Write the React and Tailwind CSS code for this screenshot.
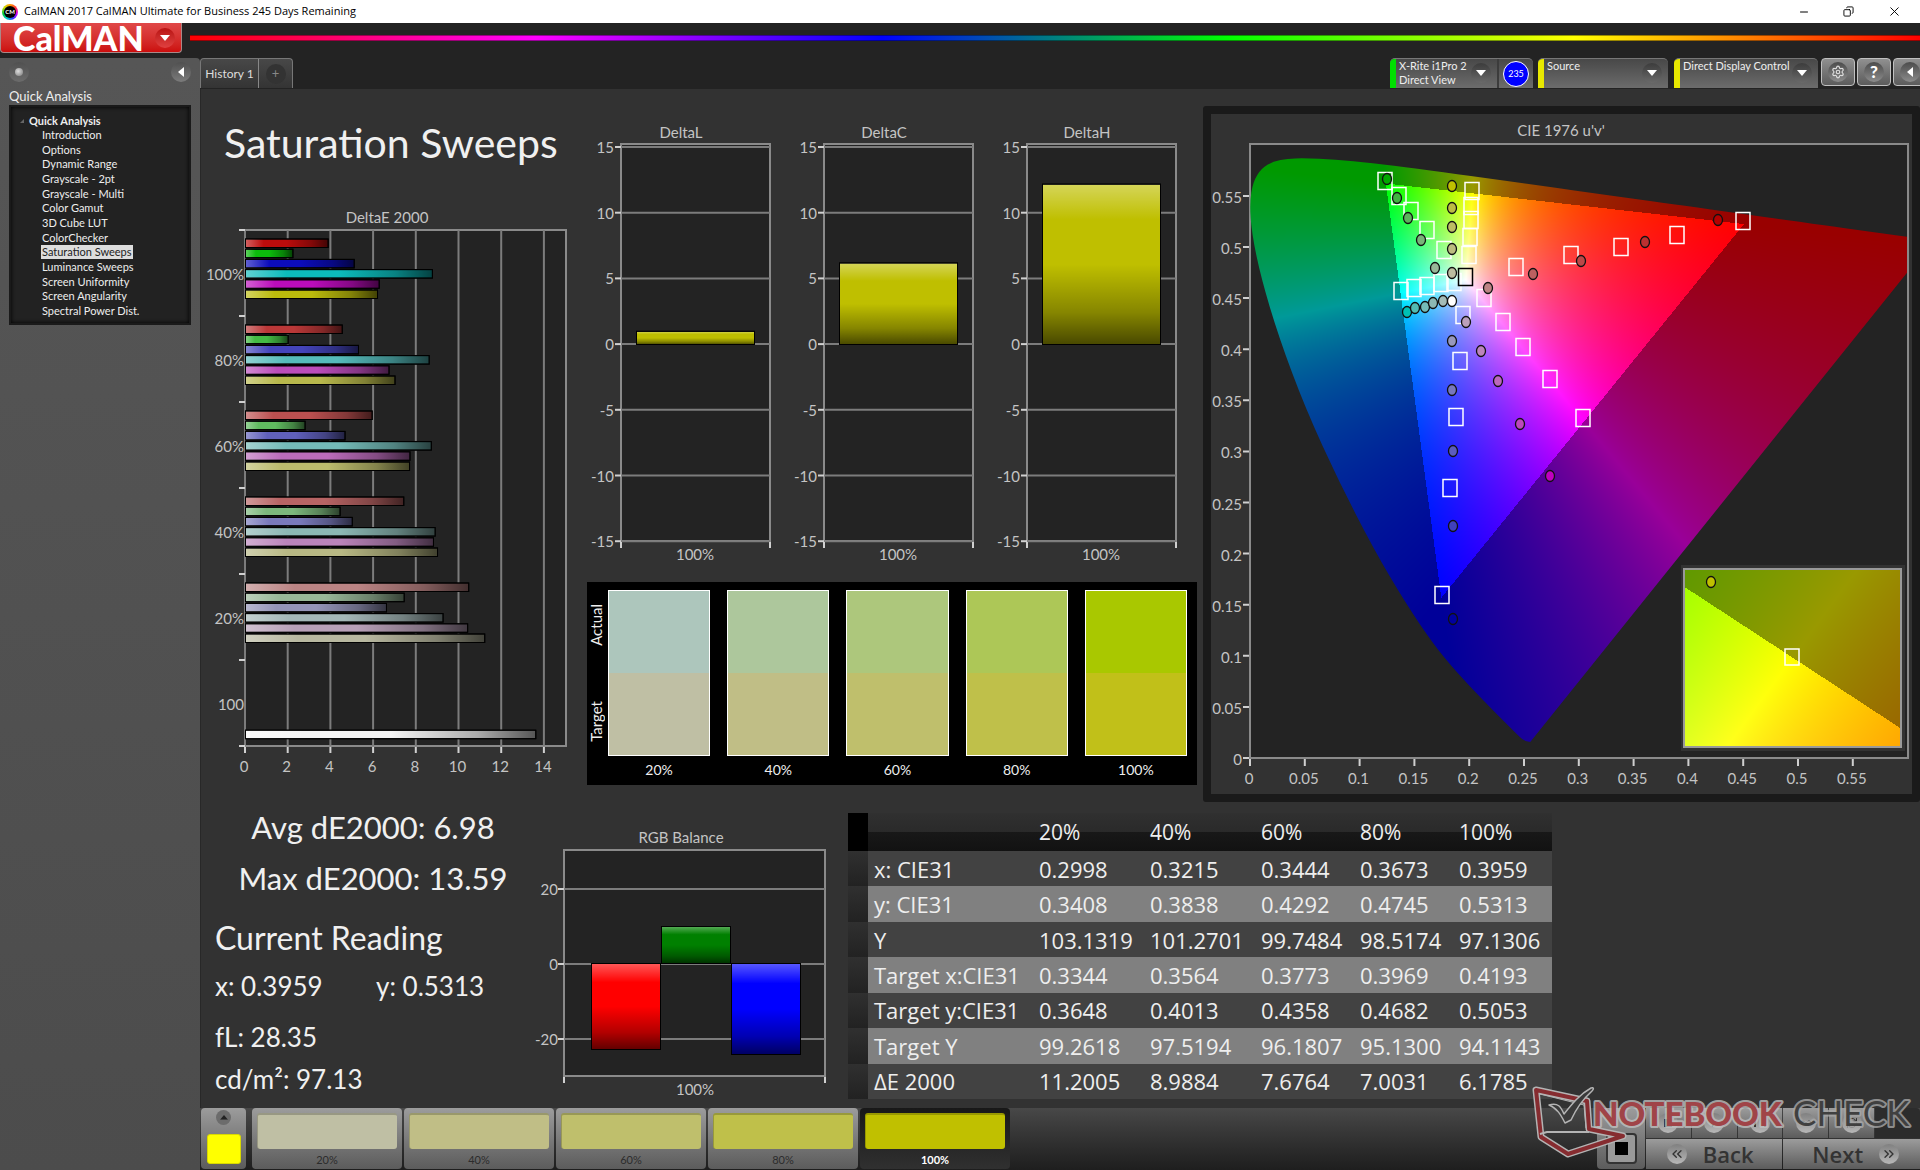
import { useEffect, useRef } from 'react'
import { Minus, Copy, X, Settings, ChevronsLeft, ChevronsRight, Infinity as Loop, RefreshCw } from 'lucide-react'

const TREE = [
  'Introduction',
  'Options',
  'Dynamic Range',
  'Grayscale - 2pt',
  'Grayscale - Multi',
  'Color Gamut',
  '3D Cube LUT',
  'ColorChecker',
  'Saturation Sweeps',
  'Luminance Sweeps',
  'Screen Uniformity',
  'Screen Angularity',
  'Spectral Power Dist.',
]

const DELTA_E = [
  { label: '100%', values: [3.87, 2.22, 5.09, 8.75, 6.26, 6.18], colors: ['#bb0c0c', '#0cbb0c', '#0c0cbb', '#0cbbbb', '#bb0cbb', '#bbbb0c'] },
  { label: '80%', values: [4.53, 2.0, 5.29, 8.6, 6.72, 7.0], colors: ['#bb3838', '#44bb44', '#4444bb', '#55bbbb', '#bb4cbb', '#b8b84c'] },
  { label: '60%', values: [5.93, 2.79, 4.66, 8.7, 7.7, 7.68], colors: ['#bb5050', '#60bb60', '#6060bb', '#74bbb8', '#bb6cbb', '#bbbb6c'] },
  { label: '40%', values: [7.41, 4.43, 5.0, 8.88, 8.8, 8.99], colors: ['#b86464', '#7cb87c', '#7a7abb', '#8cb8b4', '#bb84bb', '#b8b884'] },
  { label: '20%', values: [10.45, 7.43, 6.6, 9.25, 10.4, 11.2], colors: ['#bb8484', '#98b898', '#9494b8', '#a4b8b8', '#b8a0b8', '#b8b8a0'] },
  { label: '100', values: [0, 0, 0, 0, 0, 0, 13.59], colors: ['', '', '', '', '', '', '#f4f4f4'] },
]

const SWATCHES = [
  { label: '20%', actual: '#adc6bc', target: '#bfbfa4' },
  { label: '40%', actual: '#adc79c', target: '#c0be86' },
  { label: '60%', actual: '#adc77c', target: '#bfbf6c' },
  { label: '80%', actual: '#adc757', target: '#bfc04a' },
  { label: '100%', actual: '#a9c800', target: '#c1c019' },
]

const TABLE = [
  ['x: CIE31', '0.2998', '0.3215', '0.3444', '0.3673', '0.3959'],
  ['y: CIE31', '0.3408', '0.3838', '0.4292', '0.4745', '0.5313'],
  ['Y', '103.1319', '101.2701', '99.7484', '98.5174', '97.1306'],
  ['Target x:CIE31', '0.3344', '0.3564', '0.3773', '0.3969', '0.4193'],
  ['Target y:CIE31', '0.3648', '0.4013', '0.4358', '0.4682', '0.5053'],
  ['Target Y', '99.2618', '97.5194', '96.1807', '95.1300', '94.1143'],
  ['ΔE 2000', '11.2005', '8.9884', '7.6764', '7.0031', '6.1785'],
]

// spectral locus, CIE 1931 x, y
const LOCUS = [
  [0.1741, 0.005], [0.1714, 0.0051], [0.1689, 0.0069], [0.1644, 0.0109], [0.1566, 0.0177], [0.144, 0.0297],
  [0.1355, 0.0399], [0.1241, 0.0578], [0.1096, 0.0868], [0.0913, 0.1327], [0.0687, 0.2007], [0.0454, 0.295],
  [0.0235, 0.4127], [0.0082, 0.5384], [0.0039, 0.6548], [0.0139, 0.7502], [0.0389, 0.812], [0.0743, 0.8338],
  [0.1142, 0.8262], [0.1547, 0.8059], [0.2296, 0.7543], [0.3016, 0.6923], [0.3731, 0.6245], [0.4441, 0.5547],
  [0.5125, 0.4866], [0.5752, 0.4242], [0.627, 0.3725], [0.6915, 0.3083], [0.719, 0.2809], [0.7347, 0.2653],
]

const TARGETS = [
  [1385, 181], [1399, 196], [1411, 211], [1427, 230], [1444, 250],
  [1472, 191], [1471, 206], [1471, 220], [1470, 237], [1469, 255],
  [1401, 291], [1414, 288], [1427, 286], [1441, 283], [1454, 282],
  [1484, 298], [1503, 322], [1523, 347], [1550, 379], [1583, 418],
  [1463, 315], [1460, 361], [1456, 417], [1450, 488], [1442, 595],
  [1516, 267], [1571, 255], [1621, 247], [1677, 235], [1743, 221],
]

const READINGS = [
  [1387, 179, '#00a800'], [1397, 198, '#40b440'], [1408, 218, '#5cb45c'], [1421, 240, '#78b478'], [1435, 268, '#98b898'],
  [1452, 186, '#c0c000'], [1452, 208, '#bcbc44'], [1452, 227, '#bcbc64'], [1452, 249, '#bcbc80'], [1452, 273, '#bcbca0'],
  [1407, 312, '#00c0b4'], [1415, 308, '#50bcb4'], [1425, 307, '#74bcb8'], [1433, 303, '#8cb8b4'], [1443, 301, '#a4bcb8'],
  [1452, 301, '#ffffff'],
  [1488, 288, '#bc8484'], [1533, 274, '#bc6060'], [1581, 261, '#bc4848'], [1645, 242, '#bc3030'], [1718, 220, '#b40000'],
  [1466, 322, '#bca0bc'], [1481, 351, '#bc84bc'], [1498, 381, '#bc68bc'], [1520, 424, '#bc48bc'], [1550, 476, '#c000c0'],
  [1452, 341, '#9898bc'], [1452, 390, '#7878bc'], [1453, 451, '#5c5cbc'], [1453, 526, '#4040bc'], [1453, 619, '#0000a0'],
]

// brightest linear RGB of a chromaticity, dimmed outside of the gamut
function chromaColor(x, y) {
  const X = x / y
  const Z = (1 - x - y) / y
  const rgb = [
    3.2406 * X - 1.5372 - 0.4986 * Z,
    -0.9689 * X + 1.8758 + 0.0415 * Z,
    0.0557 * X - 0.204 + 1.057 * Z,
  ]
  const inside = Math.min(...rgb) >= 0
  const max = Math.max(...rgb)
  return rgb.map((c) => (Math.max(c, 0) / max) * (inside ? 255 : 153))
}

function ChromaCanvas({ width, height, toXy, outline }) {
  const ref = useRef(null)

  useEffect(() => {
    const ctx = ref.current.getContext('2d')
    const image = ctx.createImageData(width, height)
    for (let py = 0; py < height; py++) {
      for (let px = 0; px < width; px++) {
        const [x, y] = toXy(px, py)
        const [r, g, b] = chromaColor(x, y)
        image.data.set([r, g, b, 255], (py * width + px) * 4)
      }
    }
    ctx.putImageData(image, 0, 0)
    if (outline) {
      ctx.globalCompositeOperation = 'destination-in'
      ctx.beginPath()
      ctx.moveTo(...outline[0])
      for (let i = 1; i < outline.length - 1; i++) {
        const [ax, ay] = outline[i]
        const [bx, by] = outline[i + 1]
        ctx.quadraticCurveTo(ax, ay, (ax + bx) / 2, (ay + by) / 2)
      }
      ctx.lineTo(...outline[outline.length - 1])
      ctx.closePath()
      ctx.fill()
      ctx.globalCompositeOperation = 'source-over'
    }
  }, [width, height, toXy, outline])

  return <canvas ref={ref} width={width} height={height} className="block h-full w-full" />
}

const uvToXy = (px, py) => {
  const u = (px + 2) / 1099
  const v = (614 - py) / 1024
  const d = 6 * u - 16 * v + 12
  return [(9 * u) / d, (4 * v) / d]
}
const insetToXy = (px, py) => [0.4193 + (px - 109) / 3460, 0.5053 - (py - 89) / 2850]
const OUTLINE = LOCUS.map(([x, y]) => {
  const d = -2 * x + 12 * y + 3
  return [((4 * x) / d) * 1099 - 2, 614 - ((9 * y) / d) * 1024]
})

function Shades() {
  return (
    <svg className="absolute h-0 w-0" aria-hidden="true">
      <defs>
        <linearGradient id="shade-h">
          <stop offset="0" stopColor="#fff" stopOpacity="0.35" />
          <stop offset="0.22" stopColor="#fff" stopOpacity="0" />
          <stop offset="0.5" stopColor="#000" stopOpacity="0" />
          <stop offset="0.8" stopColor="#000" stopOpacity="0.3" />
          <stop offset="1" stopColor="#000" stopOpacity="0.65" />
        </linearGradient>
        <linearGradient id="shade-v" x1="0" y1="0" x2="0" y2="1">
          <stop offset="0" stopColor="#fff" stopOpacity="0.35" />
          <stop offset="0.22" stopColor="#fff" stopOpacity="0" />
          <stop offset="0.5" stopColor="#000" stopOpacity="0" />
          <stop offset="0.8" stopColor="#000" stopOpacity="0.3" />
          <stop offset="1" stopColor="#000" stopOpacity="0.62" />
        </linearGradient>
      </defs>
    </svg>
  )
}

function Bar({ x, y, width, height, color, shade }) {
  return (
    <g stroke="#000" strokeWidth="1">
      <rect x={x} y={y} width={width} height={height} fill={color} />
      <rect x={x} y={y} width={width} height={height} fill={`url(#${shade})`} />
    </g>
  )
}

function DeltaEChart() {
  return (
    <svg viewBox="1 0 374 580" className="block w-full font-['Lato',sans-serif]" fill="#c4c4c4" fontSize="15">
      <text x="187" y="18" textAnchor="middle">DeltaE 2000</text>
      <rect x="45" y="25" width="321" height="516" fill="#232323" stroke="#8a8a8a" strokeWidth="2" />
      {[0, 1, 2, 3, 4, 5, 6, 7].map((i) => (
        <g key={i}>
          <path d={`M${45 + i * 42.7} 25V541`} stroke="#7c7c7c" strokeWidth="2" />
          <path d={`M${45 + i * 42.7} 542v6`} stroke="#d0d0d0" strokeWidth="2" />
          <text x={44 + i * 42.7} y="567" textAnchor="middle">{i * 2}</text>
        </g>
      ))}
      {[0, 1, 2, 3, 4, 5, 6].map((i) => (
        <path key={i} d={`M39 ${25 + i * 86}h6`} stroke="#d0d0d0" strokeWidth="2" />
      ))}
      {DELTA_E.map((group, i) => (
        <g key={group.label}>
          <text x="44" y={75 + i * 86} textAnchor="end">{group.label}</text>
          {group.values.map((value, j) =>
            value > 0 ? (
              <Bar key={j} x={45.5} y={34 + i * 86 + j * 10.2} width={value * 21.36} height={8.5} color={group.colors[j]} shade="shade-h" />
            ) : null
          )}
        </g>
      ))}
    </svg>
  )
}

function DeltaChart({ title, value }) {
  const height = value * 13.14
  return (
    <svg viewBox="0 0 203 450" className="block w-full font-['Lato',sans-serif]" fill="#c4c4c4" fontSize="15">
      <text x="101" y="23" textAnchor="middle">{title}</text>
      <rect x="41" y="29" width="149" height="397" fill="#232323" stroke="#8a8a8a" strokeWidth="2" />
      {[15, 10, 5, 0, -5, -10, -15].map((tick, i) => (
        <g key={tick}>
          <path d={`M41 ${32 + i * 65.7}H190`} stroke="#7c7c7c" strokeWidth="2" />
          <path d={`M35 ${32 + i * 65.7}h6`} stroke="#d0d0d0" strokeWidth="2" />
          <text x="34" y={38 + i * 65.7} textAnchor="end">{tick}</text>
        </g>
      ))}
      <path d="M41 427v6M190 427v6" stroke="#d0d0d0" strokeWidth="2" />
      <Bar x={56.5} y={229.5 - height} width={118} height={height} color="#bfbf00" shade="shade-v" />
      <text x="115" y="445" textAnchor="middle">100%</text>
    </svg>
  )
}

function RgbBalance() {
  return (
    <svg viewBox="-9 0 299 280" className="block w-full font-['Lato',sans-serif]" fill="#c4c4c4" fontSize="15">
      <text x="141" y="23" textAnchor="middle">RGB Balance</text>
      <rect x="24" y="30" width="261" height="226" fill="#232323" stroke="#8a8a8a" strokeWidth="2" />
      {[20, 0, -20].map((tick, i) => (
        <g key={tick}>
          <path d={`M24 ${69 + i * 75}H285`} stroke="#7c7c7c" strokeWidth="2" />
          <path d={`M18 ${69 + i * 75}h6`} stroke="#d0d0d0" strokeWidth="2" />
          <text x="18" y={75 + i * 75} textAnchor="end">{tick}</text>
        </g>
      ))}
      <path d="M24 257v6M285 257v6" stroke="#d0d0d0" strokeWidth="2" />
      <Bar x={51.5} y={143.5} width={69} height={86} color="#ff0000" shade="shade-v" />
      <Bar x={121.5} y={106.5} width={69} height={37} color="#008000" shade="shade-v" />
      <Bar x={191.5} y={143.5} width={69} height={91} color="#0000ff" shade="shade-v" />
      <text x="155" y="275" textAnchor="middle">100%</text>
    </svg>
  )
}

function CieChart() {
  const ticks = [0, 0.05, 0.1, 0.15, 0.2, 0.25, 0.3, 0.35, 0.4, 0.45, 0.5, 0.55]
  return (
    <svg viewBox="1211 114 701 680" className="block w-full font-['Lato',sans-serif]" fill="#c4c4c4" fontSize="15">
      <text x="1561" y="136" textAnchor="middle">CIE 1976 u'v'</text>
      <rect x="1250" y="144" width="658" height="614" fill="#232323" stroke="#8a8a8a" strokeWidth="2" />
      {ticks.map((tick, i) => (
        <g key={tick}>
          <path d={`M${1250 + i * 54.8} 759v7M1243 ${758 - i * 51.1}h6`} stroke="#d0d0d0" strokeWidth="2" />
          <text x={1249 + i * 54.8} y="784" textAnchor="middle">{tick}</text>
          <text x="1242" y={765 - i * 51.1} textAnchor="end">{tick}</text>
        </g>
      ))}
      <foreignObject x="1250" y="145" width="657" height="612">
        <ChromaCanvas width={657} height={612} toXy={uvToXy} outline={OUTLINE} />
      </foreignObject>
      {TARGETS.map(([x, y]) => (
        <rect key={`${x}-${y}`} x={x - 7} y={y - 8.5} width="14" height="17" fill="none" stroke="#fff" strokeWidth="1.5" />
      ))}
      <rect x="1458.5" y="268.5" width="14" height="17" fill="none" stroke="#000" strokeWidth="1.5" />
      {READINGS.map(([x, y, color]) => (
        <ellipse key={`${x}-${y}`} cx={x} cy={y} rx="4.5" ry="5.5" fill={color} stroke="#111" strokeWidth="1.3" />
      ))}
      <rect x="1681" y="565" width="224" height="186" fill="#323232" />
      <foreignObject x="1683" y="568" width="219" height="180">
        <ChromaCanvas width={219} height={180} toXy={insetToXy} />
      </foreignObject>
      <rect x="1684" y="569" width="217" height="178" fill="none" stroke="#999" strokeWidth="2" />
      <rect x="1785" y="649" width="14" height="16" fill="none" stroke="#fff" strokeWidth="1.5" />
      <ellipse cx="1711" cy="582" rx="4.5" ry="5.5" fill="#c0c000" stroke="#111" strokeWidth="1.3" />
    </svg>
  )
}

function Triangle({ className }) {
  return (
    <svg viewBox="0 0 10 6" className={className}>
      <path d="M0 0h10L5 6z" fill="currentColor" />
    </svg>
  )
}

function DeviceTab({ lines, stripe, className, children }) {
  return (
    <div className={`flex h-[30px] overflow-hidden rounded-t-[5px] border-t border-[#777] bg-gradient-to-b from-[#484848] to-[#6c6c6c] ${className}`}>
      <span className={`w-[6px] shrink-0 ${stripe}`}></span>
      <button className="flex flex-1 justify-between pr-[6px] pl-[3px] text-left text-[11px] leading-[14px] text-[#eee]">
        <span>
          {lines.map((line) => (
            <span key={line} className="block whitespace-nowrap">{line}</span>
          ))}
        </span>
        <span className="mt-1 flex h-5 w-5 items-center justify-center rounded-full bg-gradient-to-b from-[#3c3c3c] to-[#6a6a6a]">
          <Triangle className="w-[10px] text-white" />
        </span>
      </button>
      {children}
    </div>
  )
}

function TopBar() {
  return (
    <>
      <div className="flex h-[23px] items-center bg-white text-black">
        <span className="ml-[2px] flex h-4 w-4 items-center justify-center rounded-full bg-[conic-gradient(#f90,#f33,#c0f,#33f,#0cc,#0c3,#cd0,#f90)]">
          <span className="flex h-3 w-3 items-center justify-center rounded-full bg-black font-['Lato',sans-serif] text-[6px] font-bold text-white">CM</span>
        </span>
        <span className="ml-[6px] flex-1 font-['Open_Sans',sans-serif] text-[11px]">CalMAN 2017 CalMAN Ultimate for Business 245 Days Remaining</span>
        <button aria-label="Minimize" className="mr-[33px]"><Minus className="h-3 w-3" strokeWidth={2} /></button>
        <button aria-label="Restore" className="mr-[33px]"><Copy className="h-[11px] w-[11px] -scale-x-100" strokeWidth={2} /></button>
        <button aria-label="Close" className="mr-[18px]"><X className="h-[15px] w-[15px]" strokeWidth={1.5} /></button>
      </div>
      <header className="flex h-[35px] items-start bg-[#232323]">
        <button className="flex h-[30px] w-[182px] items-center justify-between rounded-b-[4px] border-x border-b border-[#a88] bg-gradient-to-b from-[#e04848] to-[#cc0c0c] pl-3 pr-[6px]">
          <span className="text-[34px] leading-7 font-black text-white">CalMAN</span>
          <span className="flex h-5 w-5 items-center justify-center rounded-full bg-gradient-to-b from-[#b81010] to-[#e04040]">
            <Triangle className="w-[10px] text-white" />
          </span>
        </button>
        <div className="mt-[12px] ml-2 h-[6px] flex-1 border-y border-black/40 bg-[linear-gradient(to_right,#f00_0%,#f0f_20%,#00f_40%,#0f0_60%,#ff0_80%,#f00_100%)]"></div>
      </header>
    </>
  )
}

function Sidebar() {
  return (
    <aside className="w-[200px] shrink-0 rounded-tr-[4px] bg-gradient-to-b from-[#565656] to-[#4c4c4c]">
      <div className="flex justify-between px-[9px] pt-1">
        <button aria-label="Record" className="flex h-5 w-5 items-center justify-center rounded-full bg-gradient-to-b from-[#505050] to-[#6c6c6c]">
          <span className="h-2 w-2 rounded-full bg-[radial-gradient(circle_at_40%_40%,#ddd,#777)]"></span>
        </button>
        <button aria-label="Collapse" className="flex h-5 w-5 items-center justify-center rounded-full bg-gradient-to-b from-[#505050] to-[#7c7c7c]">
          <Triangle className="w-[10px] rotate-90 text-white" />
        </button>
      </div>
      <h2 className="mt-[6px] mb-[1px] pl-[9px] text-[13px] leading-4 text-[#eee]">Quick Analysis</h2>
      <nav className="mx-[9px] h-[220px] border-2 border-[#1a1a1a] bg-[#222] pt-[6px] text-[#eee] shadow-[inset_0_0_4px_#000]">
        <div className="flex items-center pl-[9px]">
          <svg viewBox="0 0 4 4" className="mr-[5px] h-[4px] w-[4px]"><path d="M4 0v4H0z" fill="#666" /></svg>
          <a href="#quick" className="text-[11px] leading-[15px] font-bold">Quick Analysis</a>
        </div>
        <ul className="flex h-[190px] flex-col justify-between pl-[30px] text-[11px] leading-[14px]">
          {TREE.map((item) => (
            <li key={item} className="flex">
              <a href="#item" className={item === 'Saturation Sweeps' ? 'bg-[#ddd] px-[1px] text-[#222]' : 'px-[1px]'}>{item}</a>
            </li>
          ))}
        </ul>
      </nav>
    </aside>
  )
}

function TabRow() {
  const square = 'flex h-[28px] w-[34px] shrink-0 items-center justify-center rounded-[4px] border border-[#c0c0c0] bg-gradient-to-b from-[#909090] to-[#5c5c5c] text-white'
  const knob = 'flex h-5 w-5 items-center justify-center rounded-full bg-gradient-to-b from-[#4c4c4c] to-[#8c8c8c]'
  return (
    <div className="flex h-[31px] overflow-hidden bg-[#232323]">
      <div className="flex h-[30px] rounded-t-[4px] border border-b-0 border-[#777] bg-gradient-to-b from-[#484848] to-[#343434]">
        <button className="w-[58px] border-r border-[#888] text-[12px] text-[#ddd]">History 1</button>
        <button className="flex w-[33px] items-center justify-center" aria-label="Add tab">
          <span className="flex h-5 w-5 items-center justify-center rounded-full bg-[#333] text-[13px] text-[#888]">+</span>
        </button>
      </div>
      <div className="ml-auto flex">
        <DeviceTab lines={['X-Rite i1Pro 2', 'Direct View']} stripe="bg-[#00e000]" className="mr-[5px] w-[143px]">
          <span className="flex w-[36px] items-center justify-center border-l-2 border-[#3c3c3c]">
            <span className="flex h-[26px] w-[26px] items-center justify-center rounded-full border border-white bg-[#0000ff] text-[9px] text-white">235</span>
          </span>
        </DeviceTab>
        <DeviceTab lines={['Source']} stripe="bg-[#e8e800]" className="mr-[6px] w-[130px]" />
        <DeviceTab lines={['Direct Display Control']} stripe="bg-[#e8e800]" className="mr-[3px] w-[144px]" />
        <button aria-label="Settings" className={square}><span className={knob}><Settings className="h-[14px] w-[14px] text-[#ddd]" /></span></button>
        <button aria-label="Help" className={`ml-[2px] ${square}`}><span className={`text-[17px] font-black ${knob}`}>?</span></button>
        <button aria-label="Collapse panel" className={`-mr-[7px] ml-[2px] ${square}`}><span className={knob}><Triangle className="w-[10px] rotate-90" /></span></button>
      </div>
    </div>
  )
}

function SwatchPanel() {
  return (
    <div className="ml-[12px] flex h-[203px] bg-black pt-2 pr-[10px] text-[#eee]">
      <div className="mr-[3px] flex h-[166px] w-[18px] flex-col items-center justify-between py-[14px] text-[15px] leading-[17px]">
        <span className="rotate-180 [writing-mode:vertical-rl]">Actual</span>
        <span className="rotate-180 [writing-mode:vertical-rl]">Target</span>
      </div>
      <div className="grid flex-1 grid-cols-5 gap-[17px]">
        {SWATCHES.map((s) => (
          <div key={s.label} className="text-center text-[14px]">
            <div className="mb-[3px] flex h-[166px] flex-col border border-white">
              <div className="flex-1" style={{ background: s.actual }}></div>
              <div className="flex-1" style={{ background: s.target }}></div>
            </div>
            {s.label}
          </div>
        ))}
      </div>
    </div>
  )
}

function ReadingTable() {
  return (
    <table className="h-[286px] w-[704px] table-fixed border-collapse text-left font-['Open_Sans','Noto_Sans',sans-serif] text-[22px] leading-7 text-[#eee]">
      <colgroup>
        <col className="w-[20px]" />
        <col className="w-[165px]" />
        <col className="w-[111px]" />
        <col className="w-[111px]" />
        <col className="w-[99px]" />
        <col className="w-[99px]" />
        <col />
      </colgroup>
      <thead>
        <tr className="h-[38px] bg-[linear-gradient(#303030_0%,#2a2a2a_50%,#181818_50%,#121212_100%)] text-[21px]">
          <td className="bg-black"></td>
          <td></td>
          {SWATCHES.map((s) => (
            <th key={s.label} scope="col" className="pl-[6px] font-medium">{s.label}</th>
          ))}
        </tr>
      </thead>
      <tbody>
        {TABLE.map(([name, ...cells], i) => (
          <tr key={name} className={i % 2 ? 'bg-[#808080]' : 'bg-[#424242]'}>
            <td className="bg-gradient-to-b from-[#303030] to-[#222]"></td>
            <th scope="row" className="pl-[6px] font-normal whitespace-nowrap">{name}</th>
            {cells.map((cell) => (
              <td key={cell} className="pl-[6px]">{cell}</td>
            ))}
          </tr>
        ))}
      </tbody>
    </table>
  )
}

function Watermark() {
  return (
    <svg viewBox="0 0 390 76" className="pointer-events-none absolute right-0 bottom-[10px] w-[390px]" fontFamily="Lato, sans-serif">
      <g strokeLinejoin="round" fill="none">
        <path d="M6 6l51 11 2 28 34 7-55 18-27-17z" stroke="#b4b4b4" strokeWidth="7" />
        <path d="M6 6l51 11 2 28 34 7-55 18-27-17z" stroke="#862c30" strokeWidth="4" />
        <path d="M10 10l44 11 2 23" stroke="#b4b4b4" strokeWidth="1" />
        <path d="M10 50l7-2h42" stroke="#b4b4b4" strokeWidth="2" />
        <path d="M19 21c9-3 12 2 15 9C42 20 50 10 61 4c3-1 3 1 1 3C52 16 46 25 41 36l-6 3c-4-8-8-15-16-18z" fill="#3a3a3a" stroke="#b4b4b4" strokeWidth="1.5" />
      </g>
      <g fontSize="35" strokeLinejoin="round" paintOrder="stroke" strokeWidth="4">
        <text x="63" y="42" fill="#a04448" stroke="#c0c0c0" strokeOpacity="0.8" fontWeight="900" fontSize="33">NOTEBOOK</text>
        <text x="263" y="42" fill="#404040" stroke="#a8a8a8" strokeOpacity="0.8">CHECK</text>
      </g>
    </svg>
  )
}

function BottomBar() {
  const gray = 'bg-gradient-to-b from-[#9c9c9c] to-[#5c5c5c]'
  const knob = 'flex h-5 w-5 items-center justify-center rounded-full bg-gradient-to-b from-[#808080] to-[#b8b8b8] text-[#333]'
  return (
    <footer className="relative flex h-[62px] items-start bg-gradient-to-b from-[#484848] to-[#1e1e1e]">
      <div className={`ml-[1px] flex h-[61px] w-[45px] flex-col items-center rounded-[4px] ${gray}`}>
        <button aria-label="Expand" className="mt-[2px] flex h-[15px] w-[15px] items-center justify-center rounded-full bg-[#6c6c6c]">
          <Triangle className="w-2 rotate-180 text-[#222]" />
        </button>
        <span className="mt-[9px] h-[30px] w-[34px] rounded-[3px] border border-[#d8d800] bg-[#ffff00]"></span>
      </div>
      <div className="ml-[6px] flex gap-[2px]">
        {SWATCHES.map((s, i) => (
          <button
            key={s.label}
            className={`h-[61px] rounded-[4px] pt-[5px] text-[11px] leading-[22px] ${i === 4 ? 'w-[150px] bg-gradient-to-b from-[#181818] to-[#303030] font-bold text-white' : `w-[150px] text-[#2c2c2c] ${gray}`}`}
          >
            <span className="mx-[5px] block h-[36px] rounded-[3px] border-t-2 border-l border-black/20" style={{ background: i === 4 ? '#c0c000' : s.target }}></span>
            {s.label}
          </button>
        ))}
      </div>
      <div className={`ml-auto flex h-[61px] w-[48px] flex-col items-center justify-end rounded-b-[4px] pb-[5px] ${gray}`}>
        <button aria-label="Stop" className="flex h-[31px] w-[31px] items-center justify-center rounded-[4px] border-2 border-[#333] bg-[#999]">
          <span className="h-[13px] w-[13px] bg-black"></span>
        </button>
      </div>
      <div className="ml-[1px] grid h-[61px] w-[274px] grid-cols-6 grid-rows-[30px_30px] gap-[1px]">
        {[
          <span className="h-2 w-2 bg-[#333]"></span>,
          <Triangle className="w-[9px] -rotate-90" />,
          <span className="h-2 w-3 border-x-2 border-[#333]"></span>,
          <Loop className="h-3 w-3" />,
          <RefreshCw className="h-3 w-3" />,
        ].map((icon, i) => (
          <button key={i} aria-label={`Transport ${i + 1}`} className={`flex items-center justify-center ${gray}`}>
            <span className={knob}>{icon}</span>
          </button>
        ))}
        <span className="rounded-tr-[4px] bg-[#2c2c2c]"></span>
        <button className={`col-span-3 flex items-center justify-center gap-4 pr-2 font-['Open_Sans',sans-serif] text-[22px] leading-7 font-semibold text-[#333] ${gray}`}>
          <span className={knob}><ChevronsLeft className="h-4 w-4" /></span>
          Back
        </button>
        <button className={`col-span-3 flex items-center justify-center gap-4 pl-2 font-['Open_Sans',sans-serif] text-[22px] leading-7 font-semibold text-[#333] ${gray}`}>
          Next
          <span className={knob}><ChevronsRight className="h-4 w-4" /></span>
        </button>
      </div>
      <Watermark />
    </footer>
  )
}

export default function App() {
  return (
    <div className="flex min-h-screen flex-col overflow-hidden bg-[#232323] font-['Lato',sans-serif]">
      <Shades />
      <TopBar />
      <div className="flex flex-1">
        <Sidebar />
        <main className="flex min-w-0 flex-1 flex-col">
          <TabRow />
          <div className="flex-1 border-l border-[#282828] bg-[#323232]">
            <div className="grid grid-cols-[374fr_628fr_717fr] items-start">
              <section>
                <h1 className="pt-[22px] pb-[30px] pl-[23px] text-[41px] leading-[64px] whitespace-nowrap text-[#f0f0f0]">Saturation Sweeps</h1>
                <DeltaEChart />
              </section>
              <section className="pt-[26px] pr-[6px]">
                <div className="mr-[8px] mb-[17px] ml-[5px] grid grid-cols-3">
                  <DeltaChart title="DeltaL" value={1} />
                  <DeltaChart title="DeltaC" value={6.2} />
                  <DeltaChart title="DeltaH" value={12.2} />
                </div>
                <SwatchPanel />
              </section>
              <section className="mt-[17px] rounded-[3px] border-8 border-[#1a1a1a]">
                <CieChart />
              </section>
            </div>
            <div className="flex items-start text-[#f0f0f0]">
              <section className="w-[330px] pl-[14px]">
                <p className="text-center text-[31px] leading-[51px]">Avg dE2000: 6.98</p>
                <p className="text-center text-[31px] leading-[51px]">Max dE2000: 13.59</p>
                <h2 className="mt-2 text-[32px] leading-[51px]">Current Reading</h2>
                <p className="mt-[2px] flex text-[26px] leading-[42px]">
                  <span className="w-[161px]">x: 0.3959</span>
                  <span>y: 0.5313</span>
                </p>
                <p className="mt-[9px] text-[26px] leading-[42px]">fL: 28.35</p>
                <p className="text-[26px] leading-[42px]">cd/m²: 97.13</p>
              </section>
              <section className="mt-[18px] w-[299px]">
                <RgbBalance />
              </section>
              <section className="mt-[11px] ml-[18px]">
                <ReadingTable />
              </section>
            </div>
          </div>
          <BottomBar />
        </main>
      </div>
    </div>
  )
}
